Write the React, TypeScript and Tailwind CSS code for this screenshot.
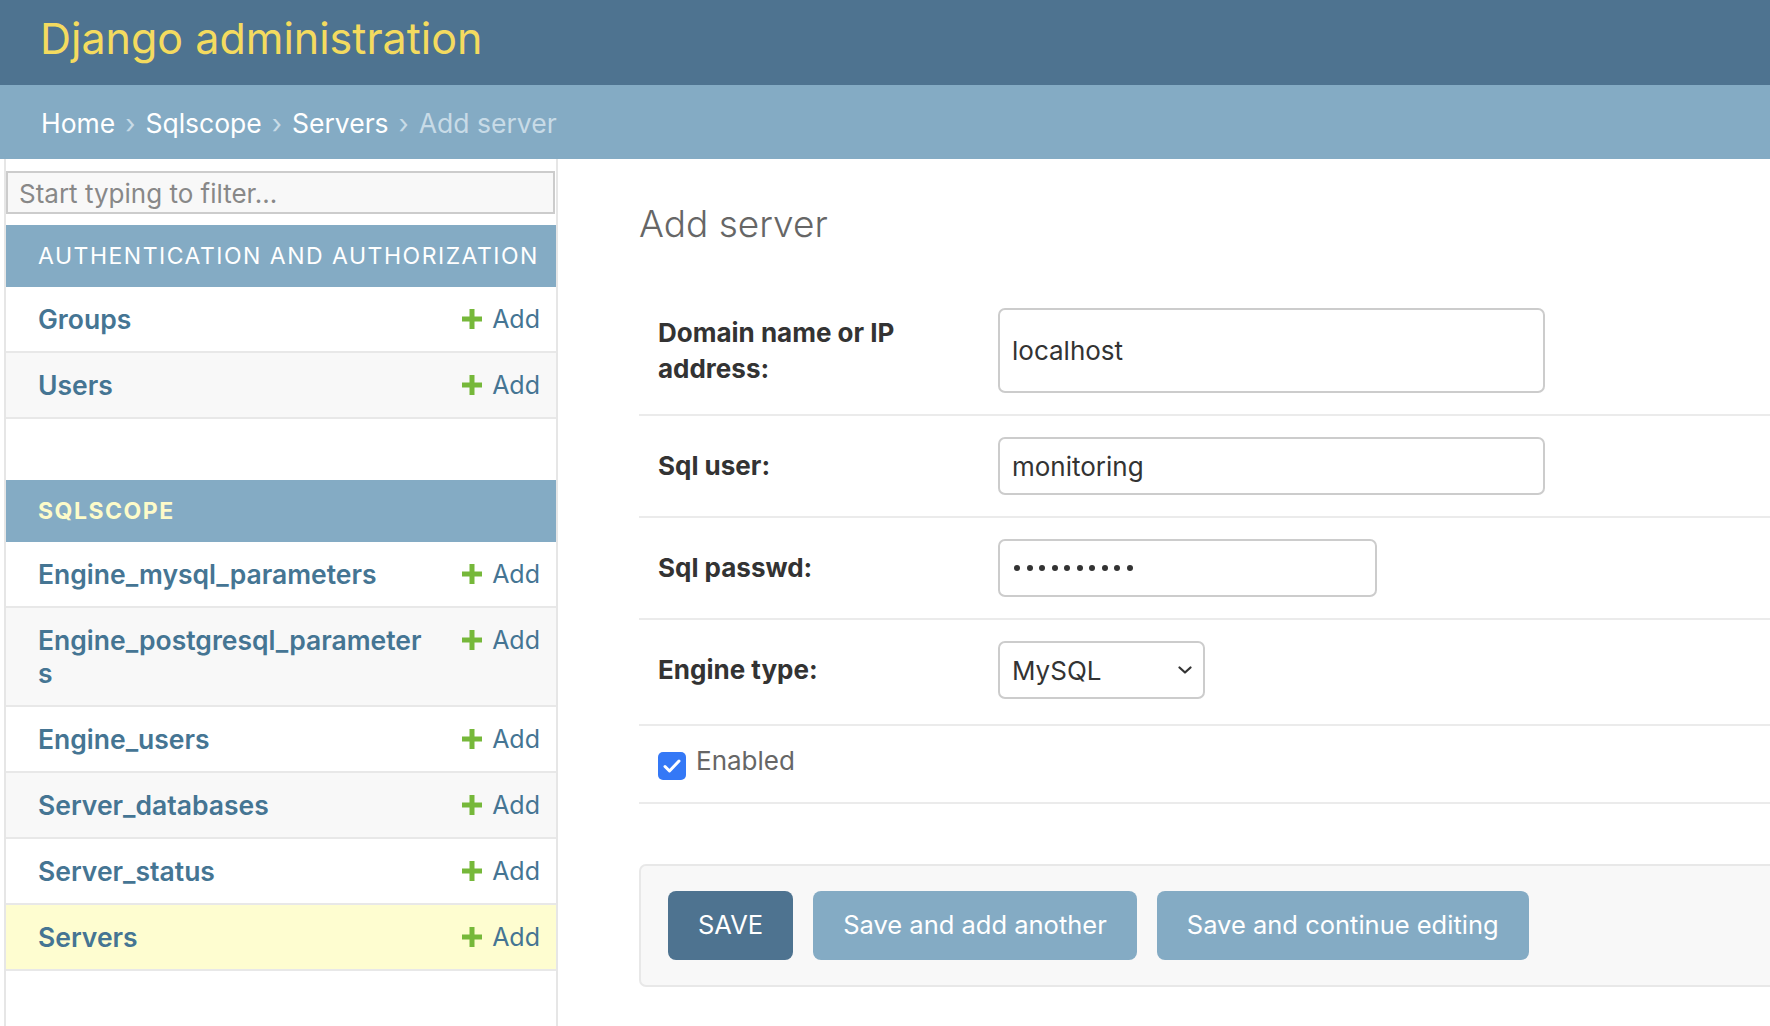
import React from 'react';

const FONT = { fontFamily: 'Inter, "Noto Sans", sans-serif' };

type Model = { name: React.ReactNode; bg: string };

const AUTH_MODELS: Model[] = [
  { name: 'Groups', bg: 'bg-white' },
  { name: 'Users', bg: 'bg-[#f8f8f8]' },
];

const SQLSCOPE_MODELS: Model[] = [
  { name: 'Engine_mysql_parameters', bg: 'bg-white' },
  { name: <>Engine_postgresql_parameter<br />s</>, bg: 'bg-[#f8f8f8]' },
  { name: 'Engine_users', bg: 'bg-white' },
  { name: 'Server_databases', bg: 'bg-[#f8f8f8]' },
  { name: 'Server_status', bg: 'bg-white' },
  { name: 'Servers', bg: 'bg-[#fefdd0]' },
];

function PlusIcon() {
  return (
    <svg width="20" height="20" viewBox="0 0 20 20" className="shrink-0">
      <path d="M7.5 0h5v7.5H20v5h-7.5V20h-5v-7.5H0v-5h7.5z" fill="#76b83a" />
    </svg>
  );
}

function ModelRow({ name, bg }: Model) {
  return (
    <div className={`flex items-start justify-between pl-[32px] pr-[16px] py-[15.5px] border-b-2 border-[#e8e8e8] ${bg}`}>
      <a className="text-[26.5px] leading-[33px] font-semibold text-[#457593]">{name}</a>
      <a className="flex items-center gap-[10px] text-[25px] leading-[33px] text-[#457593]">
        <PlusIcon />
        <span>Add</span>
      </a>
    </div>
  );
}

function Caption({ label, current }: { label: string; current?: boolean }) {
  return (
    <div className="h-[62px] bg-[#84abc4] flex items-center pl-[32px]">
      <span
        className={`text-[23px] tracking-[1.5px] uppercase ${current ? 'font-bold text-[#fdfbc9]' : 'text-white'}`}
      >
        {label}
      </span>
    </div>
  );
}

function FormRow({ label, children, pad = 'py-[21px]' }: { label: React.ReactNode; children: React.ReactNode; pad?: string }) {
  return (
    <div className={`flex items-center pl-[19px] border-b-2 border-[#ebebeb] ${pad}`}>
      <label className="w-[340px] text-[26px] leading-[36px] font-bold text-[#333]">{label}</label>
      {children}
    </div>
  );
}

export default function App() {
  return (
    <div className="h-[1026px] overflow-hidden bg-white flex flex-col" style={FONT}>
      {/* header */}
      <header className="h-[85px] shrink-0 bg-[#4e7390] flex items-center px-[40px] pb-[10px]">
        <h1 className="text-[43px] leading-[52px] text-[#f4db5f]">Django administration</h1>
      </header>

      {/* breadcrumbs */}
      <nav className="h-[74px] shrink-0 bg-[#84abc4] flex items-center px-[41px] pt-[4px] text-[26.5px] text-white gap-[10px]">
        <span>Home</span>
        <span className="text-[#c8dbe7]">›</span>
        <span>Sqlscope</span>
        <span className="text-[#c8dbe7]">›</span>
        <span>Servers</span>
        <span className="text-[#c8dbe7]">›</span>
        <span className="text-[#c8dbe7]">Add server</span>
      </nav>

      <div className="flex flex-1 min-h-0">
        {/* sidebar */}
        <aside className="ml-[4px] w-[554px] shrink-0 border-l-2 border-r-2 border-[#e6e6e6]">
          <input
            readOnly
            placeholder="Start typing to filter..."
            className="mt-[12px] w-[549px] h-[43px] bg-[#f8f8f8] border-2 border-[#cccccc] px-[11px] pt-[2px] text-[26px] text-[#333] placeholder:text-[#888] outline-none"
          />
          <div className="mt-[11px]">
            <Caption label="Authentication and Authorization" />
            {AUTH_MODELS.map((m, i) => (
              <ModelRow key={i} {...m} />
            ))}
          </div>
          <div className="mt-[61px]">
            <Caption label="Sqlscope" current />
            {SQLSCOPE_MODELS.map((m, i) => (
              <ModelRow key={i} {...m} />
            ))}
          </div>
        </aside>

        {/* content */}
        <main className="flex-1 pl-[81px] min-w-0">
          <h1 className="mt-[41px] text-[37px] leading-[48px] font-light text-[#666]">Add server</h1>

          <div className="mt-[39px]">
            <FormRow label={<>Domain name or IP<br />address:</>}>
              <div className="w-[547px] h-[85px] border-2 border-[#cccccc] rounded-[7px] flex items-center px-[12px] text-[26px] text-[#333]">
                localhost
              </div>
            </FormRow>
            <FormRow label="Sql user:">
              <div className="w-[547px] h-[58px] border-2 border-[#cccccc] rounded-[7px] flex items-center px-[12px] text-[26px] text-[#333]">
                monitoring
              </div>
            </FormRow>
            <FormRow label="Sql passwd:">
              <div className="w-[379px] h-[58px] border-2 border-[#cccccc] rounded-[7px] flex items-center gap-[6.5px] px-[14px]">
                {Array.from({ length: 10 }).map((_, i) => (
                  <span key={i} className="w-[6px] h-[6px] rounded-full bg-[#333]" />
                ))}
              </div>
            </FormRow>
            <FormRow label="Engine type:" pad="pt-[21px] pb-[25px]">
              <div className="w-[207px] h-[58px] border-2 border-[#cccccc] rounded-[7px] flex items-center justify-between pl-[12px] pr-[11px] text-[26px] text-[#333]">
                <span>MySQL</span>
                <svg width="14" height="8" viewBox="0 0 14 8" fill="none">
                  <path d="M1.5 1.5L7 6.5L12.5 1.5" stroke="#333" strokeWidth="2.2" strokeLinecap="round" strokeLinejoin="round" />
                </svg>
              </div>
            </FormRow>
            <div className="flex items-start gap-[10px] pl-[19px] pt-[21px] pb-[22px] border-b-2 border-[#ebebeb]">
              <div className="mt-[5px] w-[28px] h-[28px] rounded-[5px] bg-[#3478f6] flex items-center justify-center">
                <svg width="18" height="14" viewBox="0 0 18 14" fill="none">
                  <path d="M2 7.5L6.5 12L16 2" stroke="white" strokeWidth="3" strokeLinecap="round" strokeLinejoin="round" />
                </svg>
              </div>
              <span className="text-[26px] leading-[27px] text-[#666]">Enabled</span>
            </div>
          </div>

          {/* submit row */}
          <div className="mt-[60px] mr-[-20px] bg-[#f8f8f8] border-2 border-[#e8e8e8] rounded-[7px] px-[27px] py-[25px] flex gap-[20px]">
            <button className="h-[69px] px-[30px] rounded-[8px] bg-[#4e7390] text-white text-[25.5px]">SAVE</button>
            <button className="h-[69px] px-[30px] rounded-[8px] bg-[#84abc4] text-white text-[25.5px]">Save and add another</button>
            <button className="h-[69px] px-[30px] rounded-[8px] bg-[#84abc4] text-white text-[25.5px]">Save and continue editing</button>
          </div>
        </main>
      </div>
    </div>
  );
}
